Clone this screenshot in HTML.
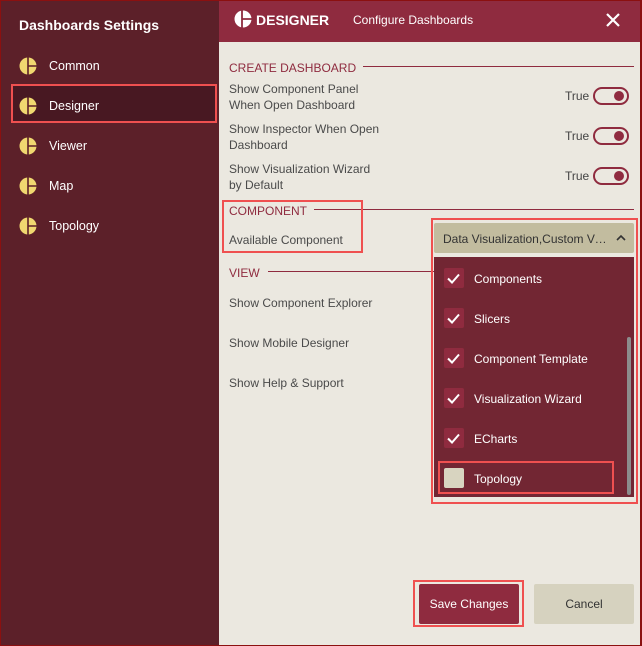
<!DOCTYPE html><html><head><style>
*{margin:0;padding:0;box-sizing:border-box}
body{width:642px;height:646px;overflow:hidden;font-family:"Liberation Sans",sans-serif;background:#ebe8e0;position:relative}
.a{position:absolute}
#frame{left:0;top:0;width:642px;height:646px;border:1px solid #8b1010;border-right-width:2px}
#side{left:1px;top:1px;width:218px;height:644px;background:#5c2029}
#hdr{left:219px;top:1px;width:421px;height:41px;background:#8f2b3f}
.t{color:#fff;font-size:12.5px}
.lab{color:#4a4a4a;font-size:12px;line-height:16px;left:229px}
.sec{color:#8f2b3f;font-size:12px;left:229px;background:#ebe8e0;padding-right:7px;z-index:2}
.ln{height:1px;background:#8f2b3f}
.tg{width:36px;height:18px;border:2px solid #8f2b3f;border-radius:9px;left:593px}
.tg:after{content:"";position:absolute;right:3px;top:2px;width:10px;height:10px;border-radius:50%;background:#8f2b3f}
.tr{left:565px;color:#444;font-size:12px}
.hl{border:2px solid #ef5050}
.cb{left:444px;width:20px;height:20px;background:#8f2b3f;border-radius:2px}
.it{left:474px;color:#fff;font-size:12px}
</style></head><body>
<div class="a" id="side"></div>
<div class="a" id="hdr"></div>
<div class="a t" style="left:19px;top:17px;font-size:14px;font-weight:bold">Dashboards Settings</div>
<div class="a" style="left:12px;top:85px;width:203px;height:36px;background:#481822"></div>
<svg class="a" style="left:0;top:0" width="219" height="646">
<g fill="#f0d870" stroke="#5c2029" stroke-width="1.6">
<circle cx="28" cy="66" r="8.5" stroke="none"/><path d="M28 57.5V74.5M28 66H36.5"/>
<circle cx="28" cy="106" r="8.5" stroke="none"/><path d="M28 97.5V114.5M28 106H36.5"/>
<circle cx="28" cy="146" r="8.5" stroke="none"/><path d="M28 137.5V154.5M28 146H36.5"/>
<circle cx="28" cy="186" r="8.5" stroke="none"/><path d="M28 177.5V194.5M28 186H36.5"/>
<circle cx="28" cy="226" r="8.5" stroke="none"/><path d="M28 217.5V234.5M28 226H36.5"/>
</g></svg>
<div class="a t" style="left:49px;top:59px">Common</div>
<div class="a t" style="left:49px;top:99px">Designer</div>
<div class="a t" style="left:49px;top:139px">Viewer</div>
<div class="a t" style="left:49px;top:179px">Map</div>
<div class="a t" style="left:49px;top:219px">Topology</div>
<div class="a hl" style="left:11px;top:84px;width:206px;height:39px"></div>
<svg class="a" style="left:234px;top:10px" width="20" height="20"><circle cx="9" cy="9" r="8.5" fill="#fff"/><path d="M8 0.5V17.5M8 9H17.5" stroke="#8f2b3f" stroke-width="1.8"/></svg>
<div class="a t" style="left:256px;top:12px;font-size:14px;font-weight:bold">DESIGNER</div>
<div class="a t" style="left:353px;top:13px;font-size:12px">Configure Dashboards</div>
<svg class="a" style="left:606px;top:13px" width="14" height="14"><path d="M1 1L13 13M13 1L1 13" stroke="#fff" stroke-width="2.2"/></svg>
<div class="a ln" style="left:345px;top:66px;width:289px"></div>
<div class="a sec" style="top:61px">CREATE DASHBOARD</div>
<div class="a lab" style="top:81px">Show Component Panel<br>When Open Dashboard</div>
<div class="a lab" style="top:121px">Show Inspector When Open<br>Dashboard</div>
<div class="a lab" style="top:161px">Show Visualization Wizard<br>by Default</div>
<div class="a tr" style="top:89px">True</div><div class="a tg" style="top:87px"></div>
<div class="a tr" style="top:129px">True</div><div class="a tg" style="top:127px"></div>
<div class="a tr" style="top:169px">True</div><div class="a tg" style="top:167px"></div>
<div class="a ln" style="left:313px;top:209px;width:321px"></div>
<div class="a sec" style="top:204px">COMPONENT</div>
<div class="a lab" style="top:232px">Available Component</div>
<div class="a hl" style="left:222px;top:200px;width:141px;height:53px"></div>
<div class="a ln" style="left:268px;top:271px;width:166px"></div>
<div class="a sec" style="top:266px">VIEW</div>
<div class="a lab" style="top:295px">Show Component Explorer</div>
<div class="a lab" style="top:335px">Show Mobile Designer</div>
<div class="a lab" style="top:375px">Show Help &amp; Support</div>
<div class="a" style="left:434px;top:223px;width:200px;height:30px;background:#c2bc9f;border-radius:2px"></div>
<div class="a" style="left:443px;top:232px;width:166px;white-space:nowrap;overflow:hidden;text-overflow:ellipsis;color:#333;font-size:12px">Data Visualization,Custom Visualization</div>
<svg class="a" style="left:615px;top:233px" width="12" height="10"><path d="M2 7L6 3L10 7" stroke="#333" stroke-width="1.6" fill="none"/></svg>
<div class="a" style="left:434px;top:257px;width:200px;height:240px;background:#722633"></div>
<div class="a" style="left:627px;top:337px;width:4px;height:158px;background:#8c8c8c;border-radius:2px"></div>
<div class="a cb" style="top:268px"></div><div class="a it" style="top:272px">Components</div>
<div class="a cb" style="top:308px"></div><div class="a it" style="top:312px">Slicers</div>
<div class="a cb" style="top:348px"></div><div class="a it" style="top:352px">Component Template</div>
<div class="a cb" style="top:388px"></div><div class="a it" style="top:392px">Visualization Wizard</div>
<div class="a cb" style="top:428px"></div><div class="a it" style="top:432px">ECharts</div>
<div class="a cb" style="top:468px;background:#d8d4c0"></div><div class="a it" style="top:472px">Topology</div>
<svg class="a" style="left:0;top:0" width="642" height="646"><g stroke="#fff" stroke-width="2" fill="none">
<path d="M448 278.5L452 282.5L459 274.5"/><path d="M448 318.5L452 322.5L459 314.5"/><path d="M448 358.5L452 362.5L459 354.5"/><path d="M448 398.5L452 402.5L459 394.5"/><path d="M448 438.5L452 442.5L459 434.5"/>
</g></svg>
<div class="a hl" style="left:438px;top:461px;width:176px;height:33px"></div>
<div class="a hl" style="left:431px;top:218px;width:207px;height:286px"></div>
<div class="a" style="left:419px;top:584px;width:100px;height:40px;background:#8f2b3f;border-radius:2px;color:#fff;font-size:12px;text-align:center;line-height:40px">Save Changes</div>
<div class="a hl" style="left:413px;top:580px;width:111px;height:47px"></div>
<div class="a" style="left:534px;top:584px;width:100px;height:40px;background:#d6d2bf;border-radius:2px;color:#333;font-size:12px;text-align:center;line-height:40px">Cancel</div>
<div class="a" id="frame"></div>
</body></html>
